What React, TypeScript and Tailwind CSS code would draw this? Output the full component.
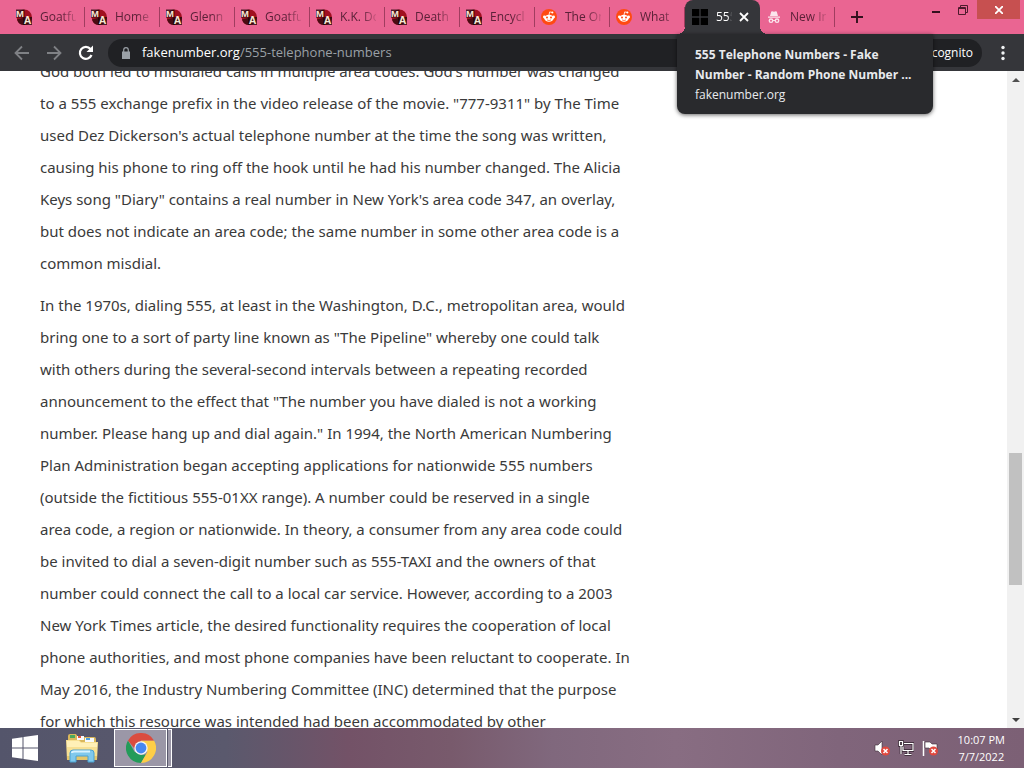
import type { ReactNode } from "react";

const wikiTabs = ["Goatfu", "Home", "Glenn", "Goatfu", "K.K. Do", "Death", "Encycl"];
const redditTabs = ["The On", "What"];

const paragraphs = [
  [
    "God both led to misdialed calls in multiple area codes. God's number was changed",
    "to a 555 exchange prefix in the video release of the movie. \"777-9311\" by The Time",
    "used Dez Dickerson's actual telephone number at the time the song was written,",
    "causing his phone to ring off the hook until he had his number changed. The Alicia",
    "Keys song \"Diary\" contains a real number in New York's area code 347, an overlay,",
    "but does not indicate an area code; the same number in some other area code is a",
    "common misdial.",
  ],
  [
    "In the 1970s, dialing 555, at least in the Washington, D.C., metropolitan area, would",
    "bring one to a sort of party line known as \"The Pipeline\" whereby one could talk",
    "with others during the several-second intervals between a repeating recorded",
    "announcement to the effect that \"The number you have dialed is not a working",
    "number. Please hang up and dial again.\" In 1994, the North American Numbering",
    "Plan Administration began accepting applications for nationwide 555 numbers",
    "(outside the fictitious 555-01XX range). A number could be reserved in a single",
    "area code, a region or nationwide. In theory, a consumer from any area code could",
    "be invited to dial a seven-digit number such as 555-TAXI and the owners of that",
    "number could connect the call to a local car service. However, according to a 2003",
    "New York Times article, the desired functionality requires the cooperation of local",
    "phone authorities, and most phone companies have been reluctant to cooperate. In",
    "May 2016, the Industry Numbering Committee (INC) determined that the purpose",
    "for which this resource was intended had been accommodated by other",
  ],
];

function WikiIcon() {
  return (
    <svg viewBox="0 0 16 16" className="size-4 shrink-0" aria-hidden="true">
      <circle cx="8.300" cy="8.300" r="7.700" fill="#a00f20" />
      <path d="M1 10.500A7.700 7.700 0 0 0 9 16L8.500 8.500Z" fill="#4a0b12" />
      <path d="M0 .5h8.500v8H0zM7 8h9v8H7z" fill="#1c0508" opacity=".75" />
      <g fontFamily="Liberation Sans, sans-serif" fontWeight="700" fill="#f8e8d4">
        <text x="0" y="7.700" fontSize="9.500">M</text>
        <text x="7.700" y="15.300" fontSize="10.500">A</text>
      </g>
    </svg>
  );
}

function RedditIcon() {
  return (
    <svg viewBox="0 0 16 16" className="size-4 shrink-0" aria-hidden="true">
      <circle cx="8" cy="8" r="8" fill="#ff4a12" />
      <path d="M8 6 8.700 2.900 11 3.400" fill="none" stroke="#fff" strokeWidth=".8" />
      <g fill="#fff">
        <circle cx="11.400" cy="3.500" r="1" />
        <circle cx="3.400" cy="8" r="1.400" />
        <circle cx="12.600" cy="8" r="1.400" />
        <ellipse cx="8" cy="9.300" rx="4.700" ry="3.500" />
      </g>
      <circle cx="6" cy="8.600" r="1" fill="#ff4a12" />
      <circle cx="10" cy="8.600" r="1" fill="#ff4a12" />
      <path d="M6 10.900q2 1.300 4 0" fill="none" stroke="#ff4a12" strokeWidth=".7" />
    </svg>
  );
}

function GridIcon() {
  return (
    <svg viewBox="0 0 16 16" className="size-4 shrink-0" aria-hidden="true">
      <path d="M0 0h7.300v7.300H0zM8.700 0H16v7.300H8.700zM0 8.700h7.300V16H0zM8.700 8.700H16V16H8.700z" fill="#000" />
    </svg>
  );
}

function IncognitoIcon() {
  return (
    <svg viewBox="0 0 16 16" className="size-4 shrink-0" aria-hidden="true">
      <path d="M5.200 2.700Q5.500 2 6.200 2.200L8 2.700l1.800-.5q.7-.2 1 .5L12 7H4zM2 7.500h12v1.200H2z" fill="#fbe4ec" />
      <g fill="#fbe4ec">
        <circle cx="5" cy="11.700" r="2.400" />
        <circle cx="11" cy="11.700" r="2.400" />
        <path d="M7 11h2v1H7z" />
      </g>
      <circle cx="5" cy="11.700" r="1" fill="#ea6592" />
      <circle cx="11" cy="11.700" r="1" fill="#ea6592" />
    </svg>
  );
}

function Tab({ icon, label }: { icon: ReactNode; label: string }) {
  return (
    <button
      role="tab"
      aria-selected="false"
      className="flex h-[34px] w-[75px] shrink-0 items-center gap-2 pl-[6px] text-left text-xs text-[#5b2138]"
    >
      {icon}
      <span className="w-9 overflow-hidden whitespace-nowrap [mask-image:linear-gradient(to_right,#000_60%,#0003)]">
        {label}
      </span>
      <span className="ml-auto h-5 w-px bg-[#a03d5f]" />
    </button>
  );
}

function TabStrip() {
  return (
    <header className="flex h-[34px] shrink-0 items-start bg-[#ea6592] pl-[10px]">
      <div role="tablist" className="flex">
        {wikiTabs.map((label, i) => (
          <Tab key={i} icon={<WikiIcon />} label={label} />
        ))}
        {redditTabs.map((label) => (
          <Tab key={label} icon={<RedditIcon />} label={label} />
        ))}
        <div className="relative flex h-[34px] w-[75px] shrink-0 items-center rounded-t-lg bg-[#35363a] pl-[7px] text-xs text-white">
          <span className="absolute bottom-0 -left-2 size-2 bg-[radial-gradient(circle_at_0_0,transparent_8px,#35363a_8px)]" />
          <span className="absolute -right-2 bottom-0 size-2 bg-[radial-gradient(circle_at_100%_0,transparent_8px,#35363a_8px)]" />
          <button role="tab" aria-selected="true" className="flex items-center gap-2">
            <GridIcon />
            <span className="w-4 overflow-hidden whitespace-nowrap [mask-image:linear-gradient(to_right,#000_75%,transparent)]">
              555
            </span>
          </button>
          <button aria-label="Close tab" className="ml-[7px]">
            <svg viewBox="0 0 10 10" className="size-[10px]" stroke="#fff" strokeWidth="1.800">
              <path d="M1 1l8 8M9 1 1 9" />
            </svg>
          </button>
        </div>
        <Tab icon={<IncognitoIcon />} label="New In" />
      </div>
      <button aria-label="New tab" className="ml-4 flex h-[34px] w-3 items-center">
        <svg viewBox="0 0 12 12" className="size-3" stroke="#33101d" strokeWidth="1.900">
          <path d="M6 0v12M0 6h12" />
        </svg>
      </button>
      <div className="ml-auto flex h-[19px] items-center pr-1">
        <button aria-label="Minimize" className="flex h-full w-[26px] items-center justify-center pt-1">
          <svg viewBox="0 0 8 2" className="h-[2px] w-2">
            <path d="M0 0h8v2H0z" fill="#33101d" />
          </svg>
        </button>
        <button aria-label="Restore" className="flex h-full w-[28px] items-center justify-center">
          <svg viewBox="0 0 10 10" className="size-[10px]" fill="none" stroke="#4d1a2c">
            <path d="M.5 2.500h7v7h-7zM2.500 2.500v-2h7v7h-2M.5 3.500h7" />
          </svg>
        </button>
        <button aria-label="Close" className="flex h-full w-[43px] items-center justify-center bg-[#c75050]">
          <svg viewBox="0 0 8 8" className="size-2" stroke="#fff" strokeWidth="1.800">
            <path d="M0 0l8 8M8 0 0 8" />
          </svg>
        </button>
      </div>
    </header>
  );
}

function Toolbar() {
  return (
    <div className="relative z-10 flex h-[37px] shrink-0 items-center bg-[#35363a] pl-[14px]">
      <nav className="flex gap-4">
        <button aria-label="Back" className="size-4">
          <svg viewBox="0 0 16 16" fill="none" stroke="#7f8185" strokeWidth="1.800">
            <path d="M15 8H2M8 1.500 1.500 8 8 14.500" />
          </svg>
        </button>
        <button aria-label="Forward" className="size-4">
          <svg viewBox="0 0 16 16" fill="none" stroke="#7f8185" strokeWidth="1.800">
            <path d="M1 8h13M8 1.500 14.500 8 8 14.500" />
          </svg>
        </button>
        <button aria-label="Reload" className="size-4">
          <svg viewBox="0 0 16 16" fill="none" stroke="#fff" strokeWidth="2.200">
            <path d="M13.500 10A6 6 0 1 1 12.500 4" />
            <path d="M15 .5V7H8.500z" fill="#fff" stroke="none" />
          </svg>
        </button>
      </nav>
      <div className="ml-[14px] flex h-7 flex-1 items-center rounded-full bg-[#202124] pl-[14px] text-[13px]">
        <svg viewBox="0 0 8 12" className="h-3 w-2 shrink-0" aria-hidden="true">
          <path d="M0 4.500h8V12H0z" fill="#9aa0a6" />
          <path d="M1.700 5V3a2.300 2.300 0 0 1 4.600 0v2" fill="none" stroke="#9aa0a6" strokeWidth="1.200" />
        </svg>
        <a href="#top" className="ml-3 text-[#9aa0a6]">
          <span className="text-white">fakenumber.org</span>/555-telephone-numbers
        </a>
      </div>
      <button className="ml-2 h-7 w-[106px] rounded-full bg-[#202124] pr-[9px] text-right text-xs text-white">
        Incognito
      </button>
      <button aria-label="Menu" className="mx-[10px] flex w-[22px] justify-center">
        <svg viewBox="0 0 4 16" className="h-4 w-1" fill="#f1f3f4">
          <circle cx="2" cy="2.500" r="1.700" />
          <circle cx="2" cy="8" r="1.700" />
          <circle cx="2" cy="13.500" r="1.700" />
        </svg>
      </button>
      <div
        role="tooltip"
        className="absolute top-0 right-[91px] w-64 rounded-b-lg bg-[#292a2d] px-[18px] pt-[11px] pb-[9px] text-xs leading-5 whitespace-nowrap text-[#e8eaed] shadow-[0_1px_4px_#0009]"
      >
        <p className="font-bold">
          555 Telephone Numbers - Fake
          <br />
          Number - Random Phone Number ...
        </p>
        <p>fakenumber.org</p>
      </div>
    </div>
  );
}

function Scrollbar() {
  return (
    <div className="flex w-[17px] shrink-0 flex-col bg-[#f1f1f1]">
      <button aria-label="Scroll up" className="flex h-[17px] items-center justify-center">
        <svg viewBox="0 0 8 4" className="h-1 w-2" fill="#505050">
          <path d="M0 4 4 0l4 4z" />
        </svg>
      </button>
      <div className="flex flex-1 flex-col px-[2px]">
        <div className="grow-[365]" />
        <div className="grow-[132] bg-[#c1c1c1]" />
        <div className="grow-[126]" />
      </div>
      <button aria-label="Scroll down" className="flex h-[17px] items-center justify-center">
        <svg viewBox="0 0 8 4" className="h-1 w-2" fill="#404040">
          <path d="M0 0h8L4 4z" />
        </svg>
      </button>
    </div>
  );
}

function ErrorBadge() {
  return (
    <g>
      <circle cx="11.500" cy="11" r="4.500" fill="#e0483e" />
      <path d="M9.500 9l4 4M13.500 9l-4 4" stroke="#fff" strokeWidth="1.500" />
    </g>
  );
}

function Taskbar() {
  return (
    <footer className="flex h-10 shrink-0 items-stretch bg-linear-[to_right,#54556b_0%,#5a596d_22%,#735267_34%,#785a6c_44%,#80687d_54%,#886d82_66%,#80657b_82%,#7c6075_100%]">
      <button aria-label="Start" className="flex w-[49px] items-center justify-center">
        <svg viewBox="0 0 26 26" className="size-[26px]" fill="#fff">
          <path d="M0 3.800 10.500 2.300v10.200H0zM11.500 2.100 26 0v12.500H11.500zM0 13.500h10.500v10.200L0 22.200zM11.500 13.500H26V26l-14.500-2.100z" />
        </svg>
      </button>
      <button aria-label="File Explorer" className="flex w-[65px] items-center justify-center">
        <svg viewBox="0 0 34 30" className="h-[30px] w-[34px]">
          <path d="M3 3q0-2 2-2h6l2 3h16q2 0 2 2v20H3z" fill="#d9b75b" />
          <path d="M5 2h5v3H5z" fill="#4da85c" />
          <path d="M12 3h7v4h-7z" fill="#f7fafc" />
          <path d="M13 3h3v2h-3z" fill="#e5553b" />
          <path d="M20 5h9v4h-9z" fill="#f7fafc" />
          <path d="M21 5h4v2h-4z" fill="#4c9ede" />
          <path d="M1 7h13l2 2h17l-1 18H2z" fill="#f7e093" />
          <path d="M2 8h12l2 2h16v4H2z" fill="#fff0b7" />
          <path d="M2 23h30v4H2z" fill="#e5c76b" />
          <path d="M5 29V20q0-3 3-3h18q3 0 3 3v9h-6v-6H11v6z" fill="#80c9ed" stroke="#4aa1d1" />
          <path d="M7 20q0-1.500 2-1.500h16" stroke="#d9f3ff" strokeWidth="2" fill="none" />
        </svg>
      </button>
      <button aria-label="Google Chrome" className="flex w-[58px]">
        <span className="my-px flex w-[53px] items-center justify-center border border-white bg-[#9b97a7]">
          <svg viewBox="0 0 30 30" className="size-[30px]">
            <path d="M2 7.500 8.500 18.800 15 22l5-.5L15 30A15 15 0 0 1 2 7.500z" fill="#239b59" />
            <path d="M15 15V7.500h13A15 15 0 0 1 15 30l6.500-11.200z" fill="#fdce47" />
            <path d="M2 7.500A15 15 0 0 1 28 7.500H15L9 16z" fill="#da4c3f" />
            <circle cx="15" cy="15" r="6.700" fill="#f5f5f5" />
            <circle cx="15" cy="15" r="5.400" fill="#4688f1" />
          </svg>
        </span>
        <span className="my-px ml-px w-1 border-y border-r border-white bg-[#9b97a7]" />
      </button>
      <div className="ml-auto flex items-center gap-2 pr-[19px]">
        <svg viewBox="0 0 16 16" className="size-4" role="img" aria-label="Muted">
          <path d="M1 5h3l4-4v14l-4-4H1z" fill="#fff" stroke="#3c2c38" strokeWidth=".6" />
          <ErrorBadge />
        </svg>
        <svg viewBox="0 0 16 16" className="size-4" role="img" aria-label="Network" fill="none">
          <path d="M6 3.500h9v7H5v-4M10 11v3M6.500 14.500h7M1.500 1.500h3v4h-3zM3 6v8" stroke="#33232f" strokeWidth="2.600" />
          <path d="M6 3.500h9v7H5v-4M10 11v3M6.500 14.500h7M1.500 1.500h3v4h-3zM3 6v8" stroke="#fff" strokeWidth="1.200" />
        </svg>
        <svg viewBox="0 0 16 16" className="size-4" role="img" aria-label="Action center alerts">
          <path d="M1.500 1v15" stroke="#fff" strokeWidth="1.500" />
          <path d="M3 2h5l2 2h5v6H9L7 8H3z" fill="#fff" stroke="#3c2c38" strokeWidth=".6" />
          <ErrorBadge />
        </svg>
        <time className="ml-3 text-center text-[11px] leading-[17px] text-white">
          10:07 PM
          <br />
          7/7/2022
        </time>
      </div>
    </footer>
  );
}

export default function App() {
  return (
    <div className="flex h-screen flex-col overflow-hidden bg-white font-['Open_Sans',sans-serif]">
      <TabStrip />
      <Toolbar />
      <div className="flex min-h-0 flex-1">
        <main className="min-w-0 flex-1 overflow-hidden pl-10 font-['Noto_Sans',sans-serif] text-[15px] leading-8 text-[#3a3a3a]">
          <article className="-mt-4 flex flex-col gap-[10px]">
            {paragraphs.map((lines, i) => (
              <p key={i}>
                {lines.map((line) => (
                  <span key={line} className="block whitespace-nowrap">
                    {line}
                  </span>
                ))}
              </p>
            ))}
          </article>
        </main>
        <Scrollbar />
      </div>
      <Taskbar />
    </div>
  );
}
